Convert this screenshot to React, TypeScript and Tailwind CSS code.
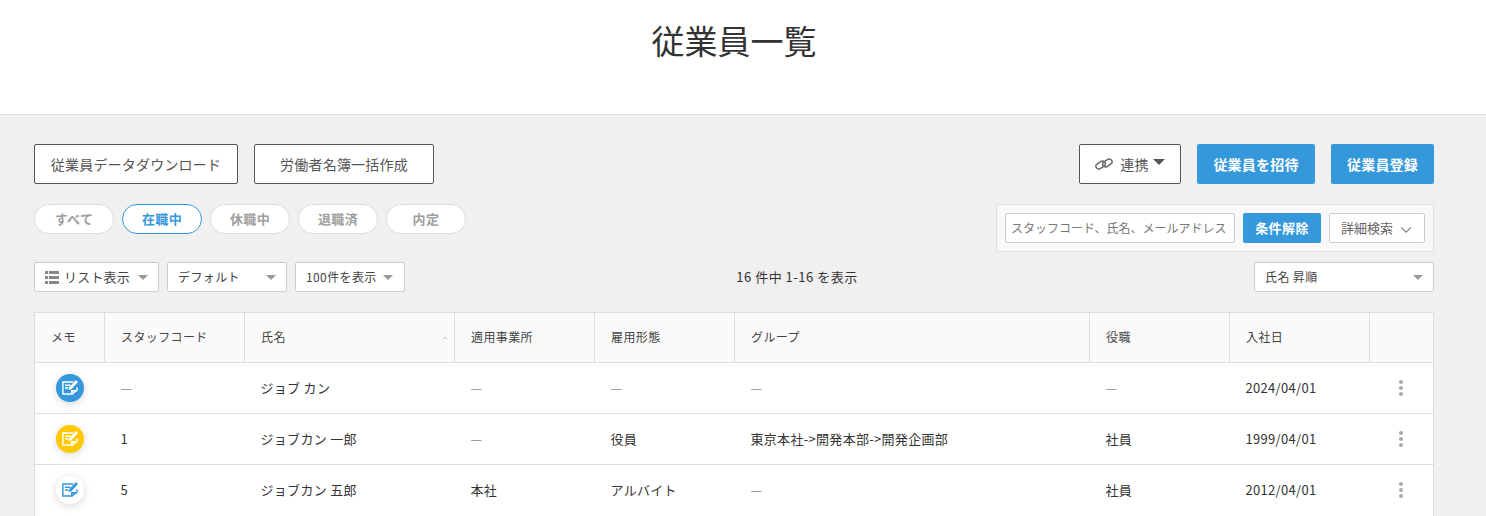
import React from 'react';
import { ChevronDown, ChevronUp } from 'lucide-react';

const gridCols = 'grid grid-cols-[70px_140px_210px_140px_140px_355px_140px_140px_1fr]';

function Caret({ className = '' }: { className?: string }) {
  return <span className={`inline-block w-0 h-0 border-x-[5px] border-x-transparent border-t-[5px] border-t-[#999] ${className}`} />;
}

function Pill({ label, active }: { label: string; active?: boolean }) {
  return (
    <div
      className={`w-20 h-[30px] rounded-full bg-white border flex items-center justify-center text-[13px] font-bold ${
        active ? 'border-[#3498db] text-[#3498db]' : 'border-[#ddd] text-[#a0a0a0]'
      }`}
    >
      {label}
    </div>
  );
}

function MemoIcon({ variant }: { variant: 'blue' | 'yellow' | 'white' }) {
  const bg = variant === 'blue' ? 'bg-[#3498db]' : variant === 'yellow' ? 'bg-[#ffc800]' : 'bg-white';
  const stroke = variant === 'white' ? '#3498db' : '#fff';
  return (
    <div className={`w-[28px] h-[28px] rounded-full flex items-center justify-center shadow-[0_2px_8px_rgba(0,0,0,0.15)] ${bg}`}>
      <svg width="20" height="20" viewBox="0 0 18 18" fill="none" stroke={stroke} strokeWidth="1.3">
        <path d="M12 3.6H2.6v10.8H11l4.4-3.6V8.5" />
        <path d="M10.6 14.6v-3h4.4" strokeWidth="1.5" />
        <path d="M4.5 6.5h5M4.5 9h3" />
        <path d="M7.6 10.8l.7-2.4 6-6.6 1.9 1.7-6 6.6z" fill={stroke} stroke="none" />
      </svg>
    </div>
  );
}

function LinkIcon() {
  return (
    <svg width="18" height="12" viewBox="0 0 18 12" fill="none" stroke="#666" strokeWidth="1.4" className="mr-[7px]">
      <rect x="0.6" y="4.2" width="10" height="5.6" rx="2.8" transform="rotate(-32 5.6 7)" />
      <rect x="7.4" y="2.2" width="10" height="5.6" rx="2.8" transform="rotate(-32 12.4 5)" />
    </svg>
  );
}

function DotsIcon() {
  return (
    <div className="flex flex-col gap-[2px]">
      <span className="w-[4px] h-[4px] rounded-full bg-[#aaa]" />
      <span className="w-[4px] h-[4px] rounded-full bg-[#aaa]" />
      <span className="w-[4px] h-[4px] rounded-full bg-[#aaa]" />
    </div>
  );
}

const headers = ['メモ', 'スタッフコード', '氏名', '適用事業所', '雇用形態', 'グループ', '役職', '入社日', ''];

const rows = [
  { memo: 'blue', code: '—', name: 'ジョブ カン', office: '—', type: '—', group: '—', role: '—', date: '2024/04/01' },
  { memo: 'yellow', code: '1', name: 'ジョブカン 一郎', office: '—', type: '役員', group: '東京本社->開発本部->開発企画部', role: '社員', date: '1999/04/01' },
  { memo: 'white', code: '5', name: 'ジョブカン 五郎', office: '本社', type: 'アルバイト', group: '—', role: '社員', date: '2012/04/01' },
] as const;

export default function App() {
  return (
    <div className="h-[516px] overflow-hidden bg-[#f0f0f0] text-[#333] text-[13px] tracking-[0.03em] font-['Noto_Sans_CJK_JP','Noto_Sans',sans-serif]">
      <header className="h-[115px] bg-white border-b border-[#ddd] flex justify-center pt-[15px] pr-[18px]">
        <h1 className="text-[33px] leading-[50px] font-normal tracking-normal">従業員一覧</h1>
      </header>

      <main className="w-[1468px] px-[34px] pt-[29px]">
        <div className="flex justify-between">
          <div className="flex flex-col">
            <div className="flex gap-4">
              <button className="w-[204px] h-10 bg-white border border-[#555] rounded-[2px] text-[14px] tracking-[0.2px] text-[#555]">従業員データダウンロード</button>
              <button className="w-[180px] h-10 bg-white border border-[#555] rounded-[2px] text-[14px] tracking-[0.2px] text-[#555]">労働者名簿一括作成</button>
            </div>
            <div className="flex gap-2 mt-5">
              <Pill label="すべて" />
              <Pill label="在職中" active />
              <Pill label="休職中" />
              <Pill label="退職済" />
              <Pill label="内定" />
            </div>
          </div>

          <div className="flex flex-col items-end">
            <div className="flex gap-4">
              <button className="w-[102px] h-10 bg-white border border-[#555] rounded-[2px] text-[14px] tracking-[0.2px] text-[#555] flex items-center justify-center">
                <LinkIcon />
                連携
                <span className="inline-block w-0 h-0 ml-[4px] -mt-[5px] border-x-[6px] border-x-transparent border-t-[6px] border-t-[#555]" />
              </button>
              <button className="w-[118px] h-10 bg-[#3498db] rounded-[2px] text-[14px] tracking-[0.2px] font-bold text-white">従業員を招待</button>
              <button className="w-[103px] h-10 bg-[#3498db] rounded-[2px] text-[14px] tracking-[0.2px] font-bold text-white">従業員登録</button>
            </div>
            <div className="w-[438px] h-[48px] mt-5 bg-[#f8f8f8] border border-[#ddd] rounded-[2px] flex items-center pl-2 gap-2">
              <div className="w-[230px] h-[30px] bg-white border border-[#ccc] rounded-[2px] flex items-center pl-[5px] text-[12px] tracking-normal text-[#777] whitespace-nowrap">
                スタッフコード、氏名、メールアドレス
              </div>
              <button className="w-[78px] h-[30px] bg-[#3498db] rounded-[2px] text-[13px] font-bold text-white">条件解除</button>
              <button className="w-[96px] h-[30px] bg-white border border-[#ccc] rounded-[2px] text-[13px] tracking-normal text-[#666] flex items-center justify-center gap-[4px] pl-[2px]">
                詳細検索
                <ChevronDown className="w-[18px] h-[18px] mt-[3px] text-[#888]" strokeWidth={1.5} />
              </button>
            </div>
          </div>
        </div>

        <div className="grid grid-cols-[auto_1fr_auto] items-center mt-[10px]">
          <div className="flex gap-2 text-[12px] text-[#444]">
            <div className="w-[125px] h-[30px] bg-white border border-[#ccc] rounded-[2px] flex items-center pl-[10px]">
              <span className="grid grid-cols-[3px_10px] gap-x-[1px] gap-y-[2px] mr-[5px]">
                {Array.from({ length: 6 }).map((_, i) => (
                  <span key={i} className="h-[3px] bg-[#888]" />
                ))}
              </span>
              <span className="text-[13px] tracking-[0.2px]">リスト表示</span>
              <Caret className="ml-[8px]" />
            </div>
            <div className="w-[120px] h-[30px] bg-white border border-[#ccc] rounded-[2px] flex items-center justify-between px-[10px]">
              デフォルト
              <Caret />
            </div>
            <div className="w-[110px] h-[30px] bg-white border border-[#ccc] rounded-[2px] flex items-center justify-between pl-[10px] pr-[11px]">
              100件を表示
              <Caret />
            </div>
          </div>
          <div className="text-center text-[13px] pr-[65px] tracking-[0.5px]">16 件中 1-16 を表示</div>
          <div className="flex justify-end">
            <div className="w-[180px] h-[30px] bg-white border border-[#ccc] rounded-[2px] flex items-center justify-between pl-[10px] pr-[10px] text-[12px] text-[#444]">
              氏名 昇順
              <Caret />
            </div>
          </div>
        </div>

        <div className="mt-5 bg-white border-l border-r border-t border-[#ddd] text-[12px]">
          <div className={`${gridCols} h-[50px] bg-[#fafafa] border-b border-[#ddd]`}>
            {headers.map((h, i) => (
              <div key={i} className={`relative flex items-center text-[#444] pl-[16px] pb-[2px] ${i < 8 ? 'border-r border-[#ddd]' : ''}`}>
                {h}
                {h === '氏名' && <ChevronUp className="absolute right-[5px] top-[21px] w-[8px] h-[8px] text-[#999]" strokeWidth={2} />}
              </div>
            ))}
          </div>
          {rows.map((r, i) => (
            <div key={i} className={`${gridCols} h-[51px] border-b border-[#ddd] last:border-b-0 last:pb-[1px] items-center text-[13px] tracking-[0.3px]`}>
              <div className="flex justify-center"><MemoIcon variant={r.memo} /></div>
              {[r.code, r.name, r.office, r.type, r.group, r.role, r.date].map((v, j) => (
                <div key={j} className={`pl-[15.5px] ${v === '—' ? 'text-[#888]' : 'text-[#333]'}`}>{v}</div>
              ))}
              <div className="flex justify-center pr-[2px]"><DotsIcon /></div>
            </div>
          ))}
        </div>
      </main>
    </div>
  );
}
